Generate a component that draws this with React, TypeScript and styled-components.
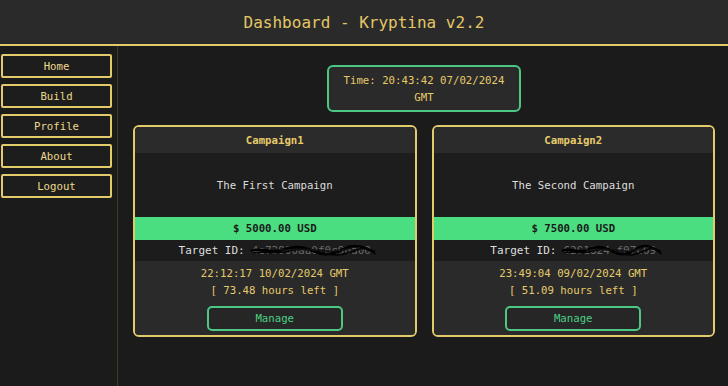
import styled, { createGlobalStyle } from "styled-components";

const GlobalStyle = createGlobalStyle`
  html, body {
    margin: 0;
    padding: 0;
    background: #1b1b1b;
  }
  body {
    font-family: "DejaVu Sans Mono", "Liberation Mono", monospace;
  }
`;

const Page = styled.div`
  width: 728px;
  height: 386px;
  display: flex;
  flex-direction: column;
  background: #1b1b1b;
  overflow: hidden;
`;

const Header = styled.header`
  height: 44px;
  flex-shrink: 0;
  background: #2a2a2a;
  border-bottom: 2px solid #e3cb6c;
  display: flex;
  align-items: center;
  justify-content: center;
  color: #e3c766;
  font-size: 16px;
`;

const Body = styled.div`
  flex: 1;
  display: flex;
`;

const Sidebar = styled.nav`
  width: 118px;
  flex-shrink: 0;
  border-right: 1px solid #403b27;
  padding: 8px 0 0 1px;
  box-sizing: border-box;
  display: flex;
  flex-direction: column;
  gap: 6px;
`;

const NavButton = styled.button`
  width: 111px;
  height: 24px;
  background: #1d1d1d;
  border: 2px solid #e3cb6c;
  border-radius: 2px;
  color: #ecd98a;
  font-family: inherit;
  font-size: 10.7px;
  padding: 0;
  cursor: pointer;
`;

const Main = styled.main`
  flex: 1;
  display: flex;
  flex-direction: column;
  align-items: center;
  padding: 19px 13px 0 15px;
  gap: 13px;
`;

const TimeBox = styled.div`
  width: 194px;
  box-sizing: border-box;
  border: 2px solid #4cc883;
  border-radius: 6px;
  background: #2a2a2a;
  color: #e6ca6a;
  font-size: 10.7px;
  line-height: 17px;
  text-align: center;
  padding: 5px 8px 4px;
`;

const Cards = styled.div`
  align-self: stretch;
  display: flex;
  gap: 15px;
`;

const Card = styled.section`
  flex: 1;
  border: 2px solid #e3cb6c;
  border-radius: 6px;
  overflow: hidden;
  display: flex;
  flex-direction: column;
`;

const CardTitle = styled.div`
  height: 26px;
  background: #2b2b2b;
  color: #e6ca6a;
  font-weight: bold;
  font-size: 10.7px;
  display: flex;
  align-items: center;
  justify-content: center;
`;

const CardDesc = styled.div`
  height: 64px;
  background: #1d1d1d;
  color: #dcdcdc;
  font-size: 10.7px;
  display: flex;
  align-items: center;
  justify-content: center;
`;

const Amount = styled.div`
  height: 23px;
  background: #4ade80;
  color: #1a1a1a;
  font-weight: bold;
  font-size: 10.7px;
  display: flex;
  align-items: center;
  justify-content: center;
`;

const TargetRow = styled.div`
  height: 21px;
  background: #1c1c1c;
  color: #dedede;
  font-size: 11px;
  display: flex;
  align-items: center;
  justify-content: center;
`;

const Redacted = styled.span`
  position: relative;
  color: #6a6a6a;
  margin-left: 7px;
`;

const Scribble = styled.svg`
  position: absolute;
  left: -4px;
  top: -2px;
  width: calc(100% + 10px);
  height: 18px;
`;

const CardFoot = styled.div`
  background: #2a2a2a;
  display: flex;
  flex-direction: column;
  align-items: center;
  padding: 4px 0 4px;
  color: #e6ca6a;
  font-size: 10.7px;
  line-height: 17px;
`;

const ManageButton = styled.button`
  margin-top: 7px;
  width: 136px;
  height: 25px;
  background: #262626;
  border: 2px solid #4cc883;
  border-radius: 5px;
  color: #4ccf85;
  font-family: inherit;
  font-size: 10.7px;
  cursor: pointer;
`;

type Campaign = {
  name: string;
  description: string;
  amount: string;
  targetId: string;
  expires: string;
  hoursLeft: string;
};

const campaigns: Campaign[] = [
  {
    name: "Campaign1",
    description: "The First Campaign",
    amount: "$ 5000.00 USD",
    targetId: "4e73900aa0f0c90a00",
    expires: "22:12:17 10/02/2024 GMT",
    hoursLeft: "[ 73.48 hours left ]",
  },
  {
    name: "Campaign2",
    description: "The Second Campaign",
    amount: "$ 7500.00 USD",
    targetId: "6291824 f07c09",
    expires: "23:49:04 09/02/2024 GMT",
    hoursLeft: "[ 51.09 hours left ]",
  },
];

const navItems = ["Home", "Build", "Profile", "About", "Logout"];

const App = () => {
  return (
    <Page>
      <GlobalStyle />
      <Header>Dashboard - Kryptina v2.2</Header>
      <Body>
        <Sidebar>
          {navItems.map((item) => (
            <NavButton key={item}>{item}</NavButton>
          ))}
        </Sidebar>
        <Main>
          <TimeBox>
            Time: 20:43:42 07/02/2024
            <br />
            GMT
          </TimeBox>
          <Cards>
            {campaigns.map((c) => (
              <Card key={c.name}>
                <CardTitle>{c.name}</CardTitle>
                <CardDesc>{c.description}</CardDesc>
                <Amount>{c.amount}</Amount>
                <TargetRow>
                  Target ID:
                  <Redacted>
                    {c.targetId}
                    <Scribble viewBox="0 0 100 18" preserveAspectRatio="none">
                      <path
                        d="M2 9 C10 5 18 12 26 8 S42 4 50 9 S66 13 74 7 S90 5 98 10"
                        stroke="#000"
                        strokeWidth="2.5"
                        fill="none"
                      />
                      <path
                        d="M4 11 C14 8 22 13 32 9 S48 7 58 11 S76 12 84 8 S94 9 99 12"
                        stroke="#050505"
                        strokeWidth="1.8"
                        fill="none"
                      />
                      <path
                        d="M20 7 C30 10 40 6 52 8 S70 10 80 6"
                        stroke="#111"
                        strokeWidth="1.4"
                        fill="none"
                      />
                    </Scribble>
                  </Redacted>
                </TargetRow>
                <CardFoot>
                  <span>{c.expires}</span>
                  <span>{c.hoursLeft}</span>
                  <ManageButton>Manage</ManageButton>
                </CardFoot>
              </Card>
            ))}
          </Cards>
        </Main>
      </Body>
    </Page>
  );
};

export default App;
